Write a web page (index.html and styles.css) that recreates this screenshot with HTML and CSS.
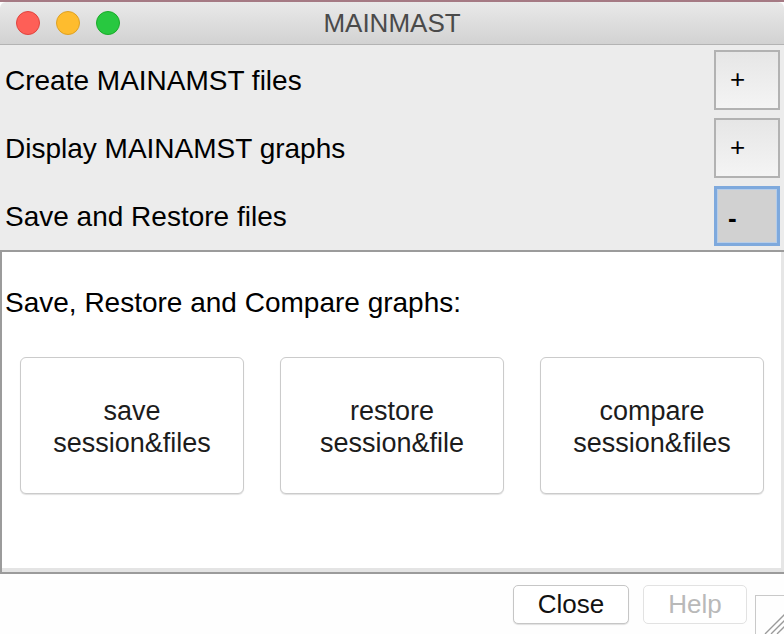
FILE: index.html
```html
<!DOCTYPE html>
<html>
<head>
<meta charset="utf-8">
<link rel="stylesheet" href="styles.css">
</head>
<body>
<div class="desktop"></div>
<div class="window">
  <div class="titlebar">
    <div class="lights">
      <span class="light red"></span>
      <span class="light yellow"></span>
      <span class="light green"></span>
    </div>
    <div class="title">MAINMAST</div>
  </div>
  <div class="sections">
    <div class="row">
      <span class="row-label">Create MAINAMST files</span>
      <button class="toggle">+</button>
    </div>
    <div class="row">
      <span class="row-label">Display MAINAMST graphs</span>
      <button class="toggle">+</button>
    </div>
    <div class="row">
      <span class="row-label">Save and Restore files</span>
      <button class="toggle active">-</button>
    </div>
  </div>
  <div class="panel">
    <div class="panel-inner">
      <div class="panel-label">Save, Restore and Compare graphs:</div>
      <div class="cards">
        <button class="card">save<br>session&amp;files</button>
        <button class="card">restore<br>session&amp;file</button>
        <button class="card">compare<br>session&amp;files</button>
      </div>
    </div>
  </div>
  <div class="footer">
    <button class="btn">Close</button>
    <button class="btn disabled">Help</button>
    <div class="grip">
      <svg width="29" height="39" viewBox="0 0 29 39">
        <line x1="9" y1="38" x2="29" y2="18" stroke="#9a9a9a" stroke-width="1.3"/>
        <line x1="15" y1="38" x2="29" y2="24" stroke="#9a9a9a" stroke-width="1.3"/>
        <line x1="21" y1="38" x2="29" y2="30" stroke="#9a9a9a" stroke-width="1.3"/>
      </svg>
    </div>
  </div>
</div>
</body>
</html>
```

FILE: styles.css
```css
html, body {
  margin: 0;
  padding: 0;
}
body {
  width: 784px;
  height: 634px;
  overflow: hidden;
  background: #fefefe;
  font-family: "Liberation Sans", Arial, sans-serif;
  color: #000;
}
.desktop {
  height: 2px;
  background: #a57a84;
}
.window {
  display: flex;
  flex-direction: column;
}
.titlebar {
  position: relative;
  height: 42px;
  border-bottom: 1px solid #b3b3b3;
  background: linear-gradient(#e9e9e9, #d2d2d2);
  border-radius: 6px 6px 0 0;
  display: flex;
  align-items: center;
}
.lights {
  display: flex;
  gap: 16px;
  margin-left: 16px;
}
.light {
  width: 22px;
  height: 22px;
  border-radius: 50%;
  border: 1px solid;
}
.red { background: #fe5f57; border-color: #e0443e; }
.yellow { background: #febc2e; border-color: #dea123; }
.green { background: #28c840; border-color: #1aab29; }
.title {
  position: absolute;
  left: 0;
  right: 0;
  top: 0;
  bottom: 0;
  display: flex;
  align-items: center;
  justify-content: center;
  font-size: 26px;
  color: #4a4a4a;
  pointer-events: none;
}
.sections {
  background: #ececec;
  padding: 5px 4px 4px 5px;
  display: flex;
  flex-direction: column;
  gap: 8px;
}
.row {
  height: 60px;
  display: flex;
  align-items: center;
  justify-content: space-between;
}
.row-label {
  font-size: 28px;
  padding-top: 2px;
  color: #000;
}
.toggle {
  width: 66px;
  height: 60px;
  box-sizing: border-box;
  border: 2px solid #b2b2b2;
  background: linear-gradient(#e6e6e6, #f4f4f4);
  font-family: "Liberation Sans", Arial, sans-serif;
  font-size: 26px;
  color: #000;
  text-align: left;
  padding: 0 0 2px 14px;
  margin: 0;
}
.toggle.active {
  border: 3px solid #7ea9dd;
  background: #d1d1d1;
  box-shadow: inset 0 0 0 1px #b6cde9;
  padding: 4px 0 0 11px;
  font-weight: bold;
}
.panel {
  background: #fff;
  border-top: 2px solid #9b9b9b;
  border-left: 2px solid #9b9b9b;
  border-bottom: 2px solid #9b9b9b;
}
.panel-inner {
  height: 316px;
  border-bottom: 4px solid #e4e4e4;
  border-right: 3px solid #e6e6e6;
  padding-left: 3px;
}
.panel-label {
  font-size: 28px;
  line-height: 32px;
  padding-top: 35px;
  color: #000;
}
.cards {
  margin-top: 38px;
  margin-left: 15px;
  display: flex;
  gap: 36px;
}
.card {
  width: 224px;
  height: 137px;
  box-sizing: border-box;
  border: 1px solid #cbcbcb;
  border-radius: 6px;
  background: #fff;
  box-shadow: 0 1px 1px rgba(0, 0, 0, 0.12);
  font-family: "Liberation Sans", Arial, sans-serif;
  font-size: 27px;
  line-height: 32px;
  color: #1c1c1c;
  padding: 2px 0 0 0;
  margin: 0;
}
.footer {
  height: 60px;
  display: flex;
  justify-content: flex-end;
  align-items: flex-start;
  padding-top: 11px;
  box-sizing: border-box;
}
.btn {
  height: 39px;
  box-sizing: border-box;
  border: 1px solid #c6c6c6;
  border-radius: 5px;
  background: #fff;
  box-shadow: 0 1px 1px rgba(0, 0, 0, 0.12);
  font-family: "Liberation Sans", Arial, sans-serif;
  font-size: 26px;
  color: #111;
  padding: 0;
  margin: 0;
  width: 116px;
}
.btn.disabled {
  width: 104px;
  margin-left: 14px;
  color: #b9b9b9;
  border-color: #e2e2e2;
  box-shadow: none;
}
.grip {
  width: 29px;
  height: 39px;
  margin-left: 8px;
  margin-top: 10px;
  border-top: 1px solid #c9c9c9;
  border-left: 1px solid #c9c9c9;
  box-sizing: border-box;
}
.grip svg {
  display: block;
}
```
